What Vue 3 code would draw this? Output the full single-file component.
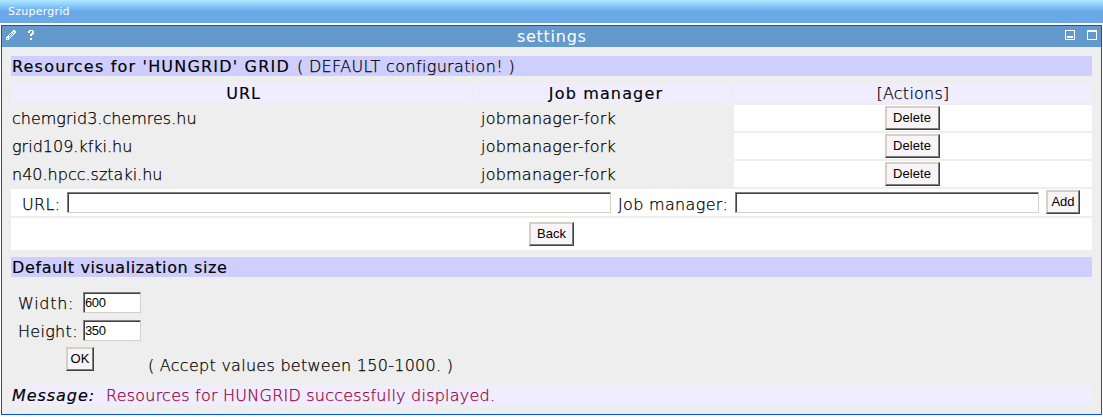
<script setup>
const rows = ['chemgrid3.chemres.hu', 'grid109.kfki.hu', 'n40.hpcc.sztaki.hu']
</script>

<template>
  <div class="page">
    <header class="top"><span>Szupergrid</span></header>
    <section class="portlet">
      <div class="titlebar">
        <svg class="pencil" width="10" height="10" viewBox="0 0 10 10" shape-rendering="crispEdges">
          <path fill="#fff" d="M7 0h2v1h1v2h-1v1h-1v1h-1v1h-1v1h-1v1h-1v1h-1v1h-3v-3h1v-1h1v-1h1v-1h1v-1h1v-1h1v-1h1z" />
          <path fill="#6399cd" d="M1 8h1v1h-1zM3 7h1v1h-1zM4 6h1v1h-1zM5 5h1v1h-1zM6 4h1v1h-1zM3 5h1v1h-1zM4 4h1v1h-1zM5 3h1v1h-1zM7 2h1v1h-1z" />
        </svg>
        <svg class="help" width="6" height="10" viewBox="0 0 6 10" shape-rendering="crispEdges">
          <path fill="#fff" d="M1 0h4v1h1v3h-1v1h-1v1h-2v-2h1v-1h1v-2h-2v2h-2v-2h1zM2 8h2v2h-2z" />
        </svg>
        <span class="title">settings</span>
        <svg class="min" width="10" height="10" viewBox="0 0 10 10" shape-rendering="crispEdges">
          <path fill="none" stroke="#fff" d="M.5.5h9v9h-9z" /><path fill="#fff" d="M2 6h6v2h-6z" />
        </svg>
        <svg class="max" width="10" height="10" viewBox="0 0 10 10" shape-rendering="crispEdges">
          <path fill="none" stroke="#fff" d="M.5.5h9v9h-9z" /><path fill="#fff" d="M0 0h10v2h-10z" />
        </svg>
      </div>

      <div class="content">
        <div class="band"><b class="res">Resources for 'HUNGRID' GRID</b><span class="conf">( DEFAULT configuration! )</span></div>

        <div class="grid">
          <b class="th">URL</b><b class="th jm">Job manager</b><span class="th act">[Actions]</span>
          <template v-for="r in rows" :key="r">
            <span class="td">{{ r }}</span>
            <span class="td fork">jobmanager-fork</span>
            <span class="cell"><button class="del">Delete</button></span>
          </template>
        </div>

        <div class="addrow">
          <label class="l-url">URL:</label><input class="i-url" />
          <label class="l-job">Job manager:</label><input class="i-job" />
          <button class="add">Add</button>
        </div>
        <div class="backrow"><button class="back">Back</button></div>

        <div class="band second"><b class="vis">Default visualization size</b></div>

        <div class="sizes">
          <div class="field"><label class="w">Width:</label><input value="600" /></div>
          <div class="field"><label>Height:</label><input value="350" /></div>
          <div class="okrow"><button class="ok">OK</button><span>( Accept values between 150-1000. )</span></div>
        </div>

        <div class="message"><b><i>Message:</i></b><span>Resources for HUNGRID successfully displayed.</span></div>
      </div>
    </section>
  </div>
</template>

<style>
body { background: #fff; }
</style>

<style scoped>
* { box-sizing: border-box; }
.page { height: 417px; overflow: hidden; font: 200 16px/22px "DejaVu Sans", sans-serif; color: #000; -webkit-text-stroke: .25px currentColor; white-space: nowrap; }
b { font-weight: 400; -webkit-text-stroke: .15px currentColor; }
.top { height: 23px; margin-bottom: 2px; padding-left: 8px; background: linear-gradient(#b0e8ff 0, #9cd8ff 3px, #6eb0f0 10px, #6ba8e8 12px, #6ba8e8 100%); color: #fff; font: 11px/23px "DejaVu Sans", sans-serif; -webkit-text-stroke: 0; letter-spacing: .25px; }
.portlet { width: 1101px; height: 390px; margin-left: 1px; border: 1px solid #0054e3; background: #eee; }
.titlebar { height: 21px; display: flex; align-items: flex-start; background: #6399cd; color: #fff; font-weight: 400; -webkit-text-stroke: 0; }
.pencil { margin: 4px 0 0 4px; }
.help { margin: 4px 0 0 12px; }
.title { flex: 1; padding-left: 483px; letter-spacing: .72px; line-height: 21px; }
.min { margin: 4px 12px 0 0; }
.max { margin: 4px 4px 0 0; }
.content { padding: 9px 9px 0; }
.band { height: 20px; padding-left: 1px; background: #ceceff; }
.res { letter-spacing: 1.19px; }
.conf { margin-left: 7px; letter-spacing: .35px; }
.grid { margin-top: 7px; display: grid; grid-template-columns: 467px 252px 358px; grid-template-rows: 20px 26px 26px 26px; column-gap: 2px; row-gap: 2px; }
.th { text-align: center; background: #efedff; letter-spacing: .9px; }
.th:first-child { padding-right: 2px; }
.act { letter-spacing: .25px; }
.jm { letter-spacing: 1.15px; }
.td { padding-left: 1px; line-height: 28px; }
.fork { letter-spacing: .22px; }
.cell { background: #fff; display: flex; justify-content: center; padding: 1px 0; }
.cell .del { margin-right: 2px; }
button { height: 24px; padding: 0; margin: 0; border: 1px solid; border-color: #d4d0c8 #404040 #404040 #d4d0c8; border-radius: 0; background: #f8f4f8; box-shadow: inset -1px -1px #808080, inset 1px 1px #d4d0c8; font: 13px/20px "Liberation Sans", sans-serif; color: #000; -webkit-text-stroke: 0; }
input { height: 21px; margin: 0; padding: 0 1px; border: 1px solid; border-color: #808080 #d4d0c8 #d4d0c8 #808080; border-radius: 0; background: #fff; box-shadow: inset 1px 1px #404040; font: 13px/17px "Liberation Sans", sans-serif; letter-spacing: -.4px; color: #000; -webkit-text-stroke: 0; }
.del { width: 55px; letter-spacing: .1px; }
.addrow { margin-top: 2px; height: 27px; background: #fff; display: flex; padding: 3px 0 0 11px; }
.addrow label { line-height: 26px; }
.l-url { width: 45px; letter-spacing: .3px; }
.i-url { width: 544px; }
.l-job { width: 117px; margin-left: 7px; letter-spacing: .33px; }
.i-job { width: 304px; }
.add { width: 34px; margin: -2px 0 0 7px; }
.backrow { margin-top: 2px; height: 32px; background: #fff; display: flex; padding: 4px 0 0 518px; }
.back { width: 45px; }
.second { margin-top: 7px; }
.vis { letter-spacing: .61px; }
.sizes { padding: 15px 0 0 7px; height: 108px; }
.field { display: flex; height: 28px; }
.field label { width: 65px; line-height: 23px; letter-spacing: .3px; }
.field .w { letter-spacing: .7px; }
.field input { width: 58px; }
.okrow { display: flex; padding-left: 48px; margin-top: -1px; }
.okrow span { margin-left: 54px; line-height: 37px; letter-spacing: .27px; }
.ok { width: 28px; }
.message { height: 20px; padding-left: 1px; background: #efedff; display: flex; }
.message b { width: 94px; letter-spacing: .95px; }
.message span { color: #903; letter-spacing: .23px; }
</style>
